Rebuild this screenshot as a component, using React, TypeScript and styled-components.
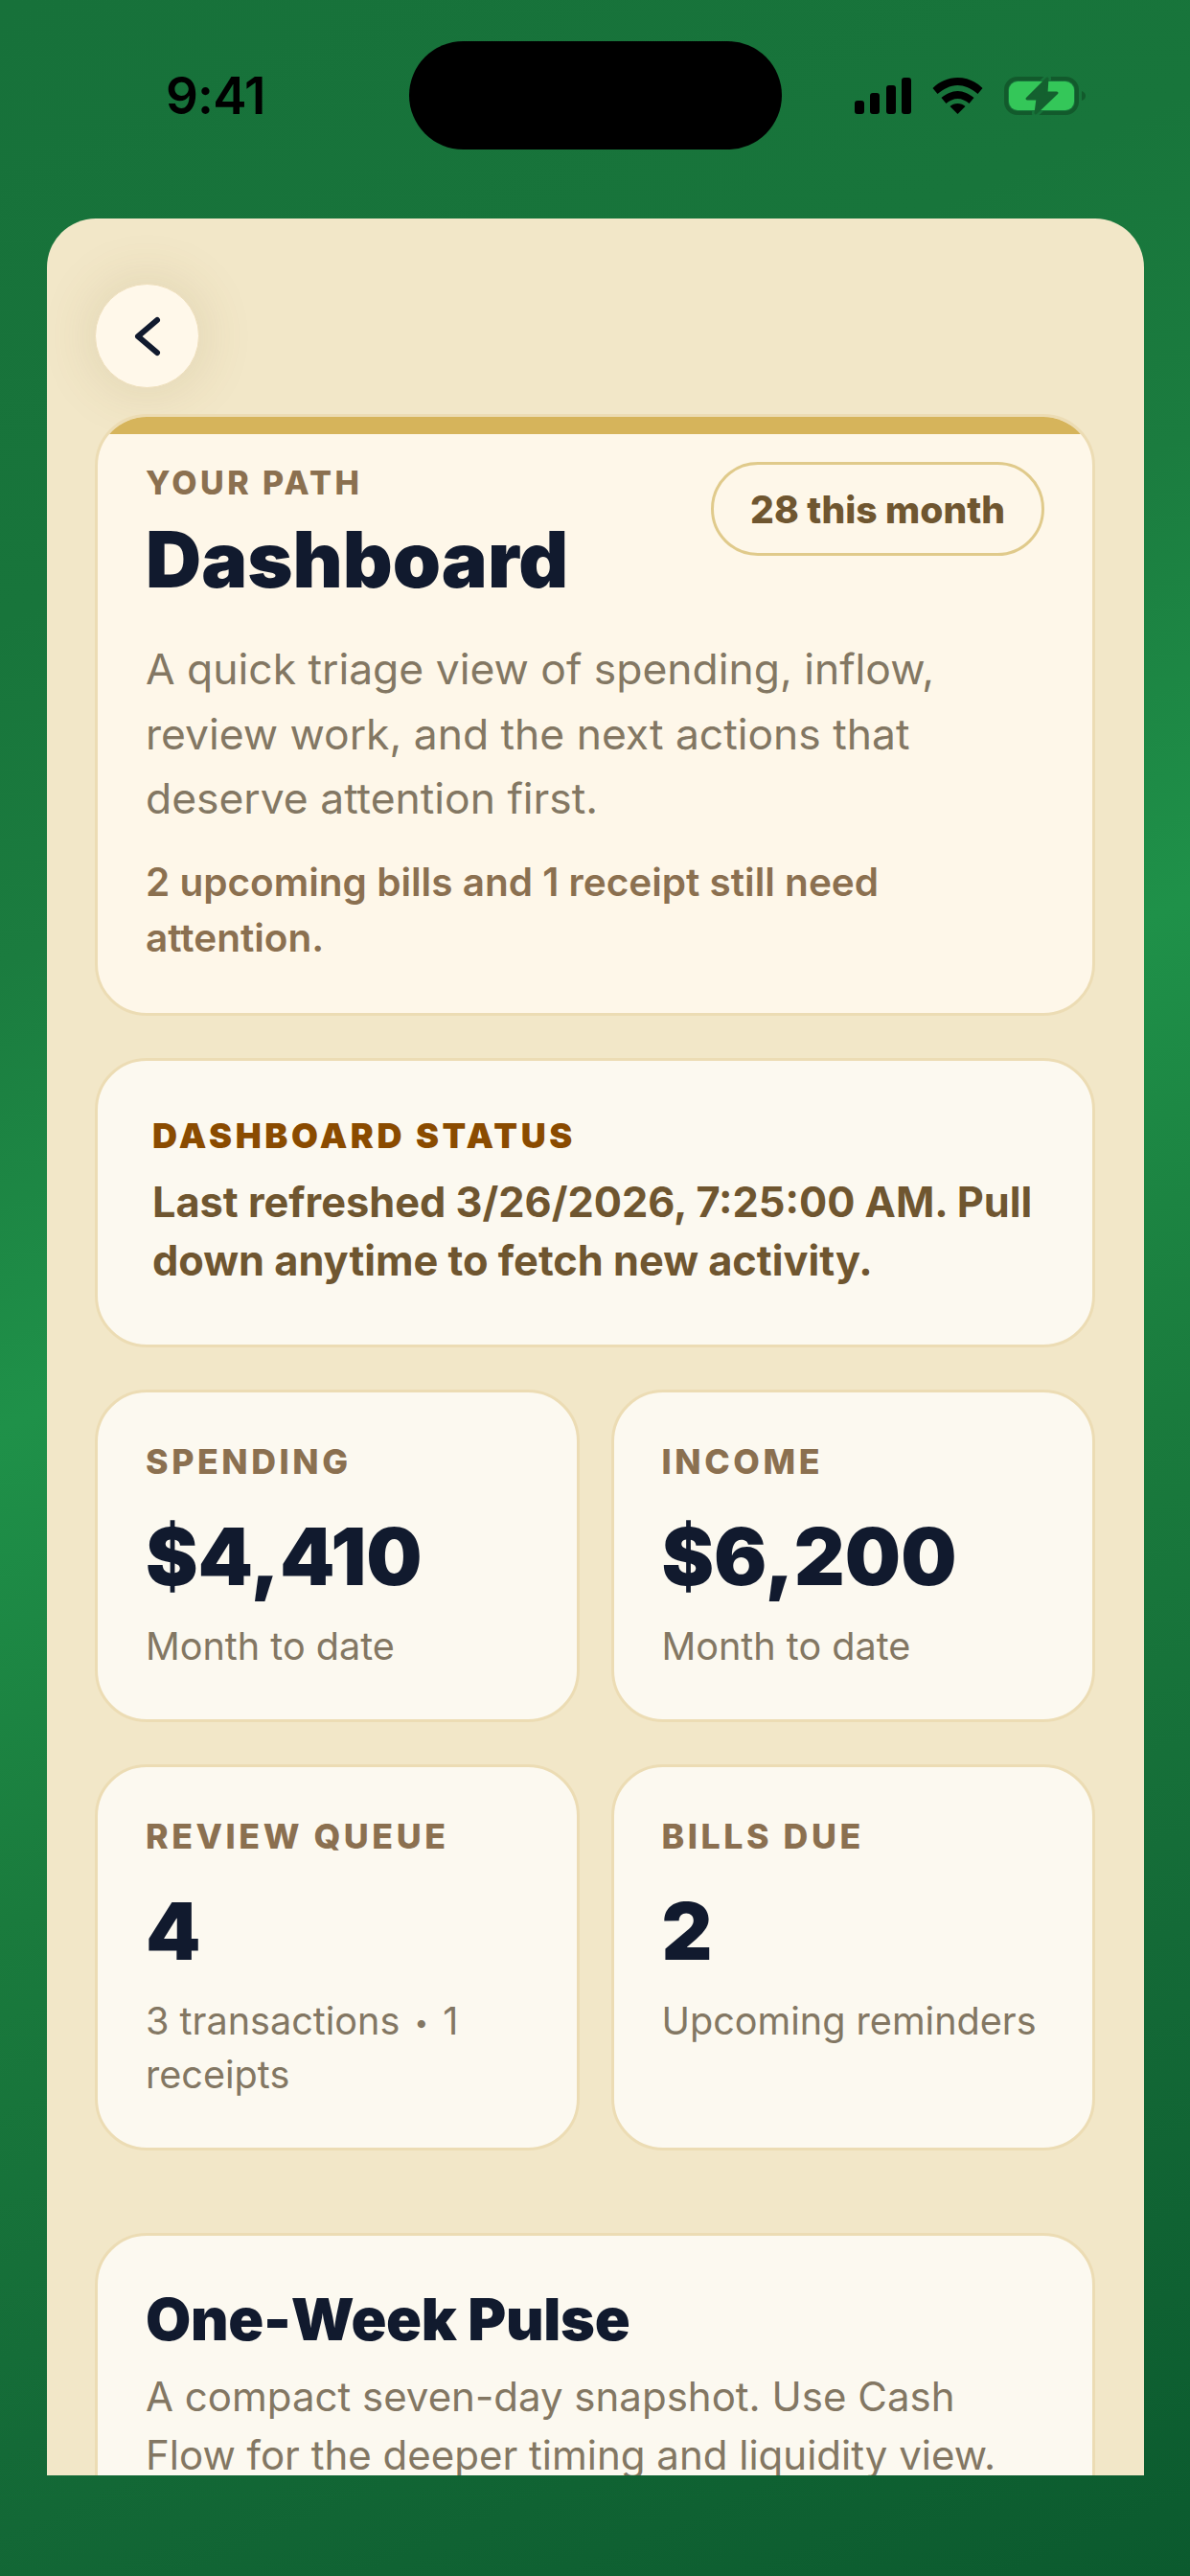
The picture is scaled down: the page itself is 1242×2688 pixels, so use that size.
import type { ReactNode } from "react";
import styled, { createGlobalStyle } from "styled-components";

const GlobalStyle = createGlobalStyle`
    html, body {
        margin: 0;
        padding: 0;
        background: #0f6a35;
    }

    * {
        box-sizing: border-box;
    }
`;

const Screen = styled.div`
    display: flex;
    flex-direction: column;
    width: 1242px;
    height: 2688px;
    overflow: hidden;
    font-family: Inter, "Liberation Sans", sans-serif;
    background: linear-gradient(
        156deg,
        #17713a 0%,
        #18753b 20%,
        #1b7c3f 31%,
        #1f9149 46%,
        #1a7b3d 62%,
        #146a37 79%,
        #0b5a2e 100%
    );
`;

const StatusBar = styled.div`
    display: flex;
    align-items: center;
    flex-shrink: 0;
    height: 228px;
    padding: 0 109px 29px 173px;
`;

const Clock = styled.div`
    width: 254px;
    font-size: 53px;
    font-weight: 600;
    letter-spacing: -0.8px;
    color: #000;
`;

const Island = styled.div`
    width: 389px;
    height: 113px;
    border-radius: 57px;
    background: #000;
`;

const StatusIcons = styled.div`
    display: flex;
    align-items: center;
    gap: 22px;
    margin-left: auto;
`;

const Panel = styled.div`
    display: flex;
    flex-direction: column;
    height: 2355px;
    margin: 0 48px 0 49px;
    padding: 68px 51px 0 50px;
    overflow: hidden;
    border-radius: 51px 51px 0 0;
    background: #f2e7c8;
`;

const BackButton = styled.div`
    display: flex;
    align-items: center;
    justify-content: center;
    flex-shrink: 0;
    width: 109px;
    height: 109px;
    margin-bottom: 27px;
    border-radius: 50%;
    background: #fff8ea;
    border: 1px solid #efe0bd;
    box-shadow: 0 0 60px rgba(120, 95, 40, 0.16);
`;

const Stack = styled.div`
    display: flex;
    flex-direction: column;
    gap: 44px;
`;

const Card = styled.div`
    flex-shrink: 0;
    border: 3px solid #ecdcb4;
    border-radius: 54px;
    background: #fcf9f0;
`;

const HeroCard = styled(Card)`
    overflow: hidden;
    background: #fef7e9;
    padding-bottom: 49px;
`;

const HeroStripe = styled.div`
    height: 18px;
    background: #d6b45b;
`;

const HeroBody = styled.div`
    padding: 31px 50px 0;
`;

const HeroHeader = styled.div`
    display: flex;
    align-items: flex-start;
    justify-content: space-between;
`;

const Eyebrow = styled.div<{ $size: number }>`
    font-size: ${props => props.$size}px;
    line-height: 40px;
    font-weight: 800;
    letter-spacing: 0.1em;
    color: #8b7050;
`;

const Title = styled.h1`
    margin: 13px 0 0;
    font-size: 80.5px;
    line-height: 94px;
    font-weight: 900;
    color: #111a2e;
`;

const Badge = styled.div`
    display: flex;
    align-items: center;
    height: 98px;
    margin-top: -2px;
    padding: 0 38px;
    border: 3px solid #e0ca8b;
    border-radius: 49px;
    font-size: 39px;
    font-weight: 800;
    color: #6f5630;
`;

const Lead = styled.p`
    margin: 34px 0 0;
    font-size: 44.4px;
    line-height: 67.5px;
    color: #837763;
`;

const Note = styled.p`
    margin: 24px 0 0;
    font-size: 40.5px;
    line-height: 58px;
    font-weight: 600;
    color: #8b7050;
`;

const StatusCard = styled(Card)`
    padding: 57px 50px 57px 57px;
`;

const StatusLabel = styled.div`
    font-size: 36px;
    line-height: 42px;
    font-weight: 900;
    letter-spacing: 0.1em;
    color: #8a4b00;
`;

const StatusText = styled.div`
    margin-top: 18px;
    font-size: 43.3px;
    line-height: 61px;
    font-weight: 700;
    color: #6f5630;
`;

const StatGrid = styled.div`
    display: grid;
    grid-template-columns: 1fr 1fr;
    gap: 44px 33px;
`;

const StatCard = styled(Card)`
    padding: 52px 47px 48px 50px;
`;

const StatValue = styled.div`
    margin-top: 33px;
    font-size: 82px;
    line-height: 94px;
    font-weight: 900;
    color: #111a2e;
`;

const StatHint = styled.div`
    margin-top: 19px;
    font-size: 39.6px;
    line-height: 55px;
    color: #837763;
`;

const Dot = styled.span`
    margin: 0 4px;
    font-size: 26px;
    vertical-align: 3px;
`;

const PulseCard = styled(Card)`
    margin-top: 42px;
    padding: 51px 50px 60px;
`;

const PulseTitle = styled.h2`
    margin: 0;
    font-size: 61px;
    line-height: 72px;
    font-weight: 900;
    letter-spacing: -0.3px;
    color: #111a2e;
`;

const PulseText = styled.p`
    margin: 14px 0 0;
    font-size: 42px;
    line-height: 61px;
    color: #837763;
`;

const SignalIcon = () => (
    <svg width="59" height="38" viewBox="0 0 59 38">
        <rect x="0" y="24" width="10" height="14" rx="3" />
        <rect x="16" y="16" width="10" height="22" rx="3" />
        <rect x="33" y="8" width="10" height="30" rx="3" />
        <rect x="49" y="0" width="10" height="38" rx="3" />
    </svg>
);

const WifiIcon = () => (
    <svg width="53" height="38" viewBox="0 0 52 38">
        <path d="M26 0C16 0 7 4 0 11l5 6c6-5 13-9 21-9s15 4 21 9l5-6C45 4 36 0 26 0Z" />
        <path d="M26 14c-6 0-12 3-17 7l5 6c3-3 8-5 12-5s9 2 12 5l5-6c-5-4-11-7-17-7Z" />
        <path d="M26 27c-3 0-6 1-8 3l8 8 8-8c-2-2-5-3-8-3Z" />
    </svg>
);

const BOLT = "M45 2 24 23h11l-2 15 22-21H44Z";

const BatteryIcon = () => (
    <svg width="85" height="40" viewBox="0 0 85 40">
        <rect x="2" y="2" width="74" height="36" rx="12" fill="none" stroke="#125a2c" strokeWidth="4" />
        <path d={BOLT} fill="#17733a" stroke="#17733a" strokeWidth="8" strokeLinejoin="round" />
        <rect x="5" y="5" width="68" height="30" rx="9" fill="#34c759" />
        <path d="M81 15c3 1 4 3 4 5s-1 4-4 5Z" fill="#125a2c" />
        <path d={BOLT} fill="#14602f" stroke="#14602f" strokeWidth="3" strokeLinejoin="round" />
    </svg>
);

const BackIcon = () => (
    <svg width="36" height="42" viewBox="0 0 36 42" fill="none">
        <path d="M28 4 8 21l20 17" stroke="#111a2e" strokeWidth="6" strokeLinecap="round" strokeLinejoin="round" />
    </svg>
);

const Stat = ({ label, value, hint }: { label: string; value: string; hint: ReactNode }) => (
    <StatCard>
        <Eyebrow $size={35.7}>{label}</Eyebrow>
        <StatValue>{value}</StatValue>
        <StatHint>{hint}</StatHint>
    </StatCard>
);

const App = () => (
    <Screen>
        <GlobalStyle />
        <StatusBar>
            <Clock>9:41</Clock>
            <Island />
            <StatusIcons>
                <SignalIcon />
                <WifiIcon />
                <BatteryIcon />
            </StatusIcons>
        </StatusBar>
        <Panel>
            <BackButton>
                <BackIcon />
            </BackButton>
            <Stack>
                <HeroCard>
                    <HeroStripe />
                    <HeroBody>
                        <HeroHeader>
                            <div>
                                <Eyebrow $size={34}>YOUR PATH</Eyebrow>
                                <Title>Dashboard</Title>
                            </div>
                            <Badge>28 this month</Badge>
                        </HeroHeader>
                        <Lead>
                            A quick triage view of spending, inflow, review work, and the next actions that deserve
                            attention first.
                        </Lead>
                        <Note>2 upcoming bills and 1 receipt still need attention.</Note>
                    </HeroBody>
                </HeroCard>
                <StatusCard>
                    <StatusLabel>DASHBOARD STATUS</StatusLabel>
                    <StatusText>
                        Last refreshed 3/26/2026, 7:25:00 AM. Pull down anytime to fetch new activity.
                    </StatusText>
                </StatusCard>
                <StatGrid>
                    <Stat label="SPENDING" value="$4,410" hint="Month to date" />
                    <Stat label="INCOME" value="$6,200" hint="Month to date" />
                    <Stat
                        label="REVIEW QUEUE"
                        value="4"
                        hint={
                            <>
                                3 transactions <Dot>•</Dot> 1 receipts
                            </>
                        }
                    />
                    <Stat label="BILLS DUE" value="2" hint="Upcoming reminders" />
                </StatGrid>
                <PulseCard>
                    <PulseTitle>One-Week Pulse</PulseTitle>
                    <PulseText>
                        A compact seven-day snapshot. Use Cash Flow for the deeper timing and liquidity view.
                    </PulseText>
                </PulseCard>
            </Stack>
        </Panel>
    </Screen>
);

export default App;
